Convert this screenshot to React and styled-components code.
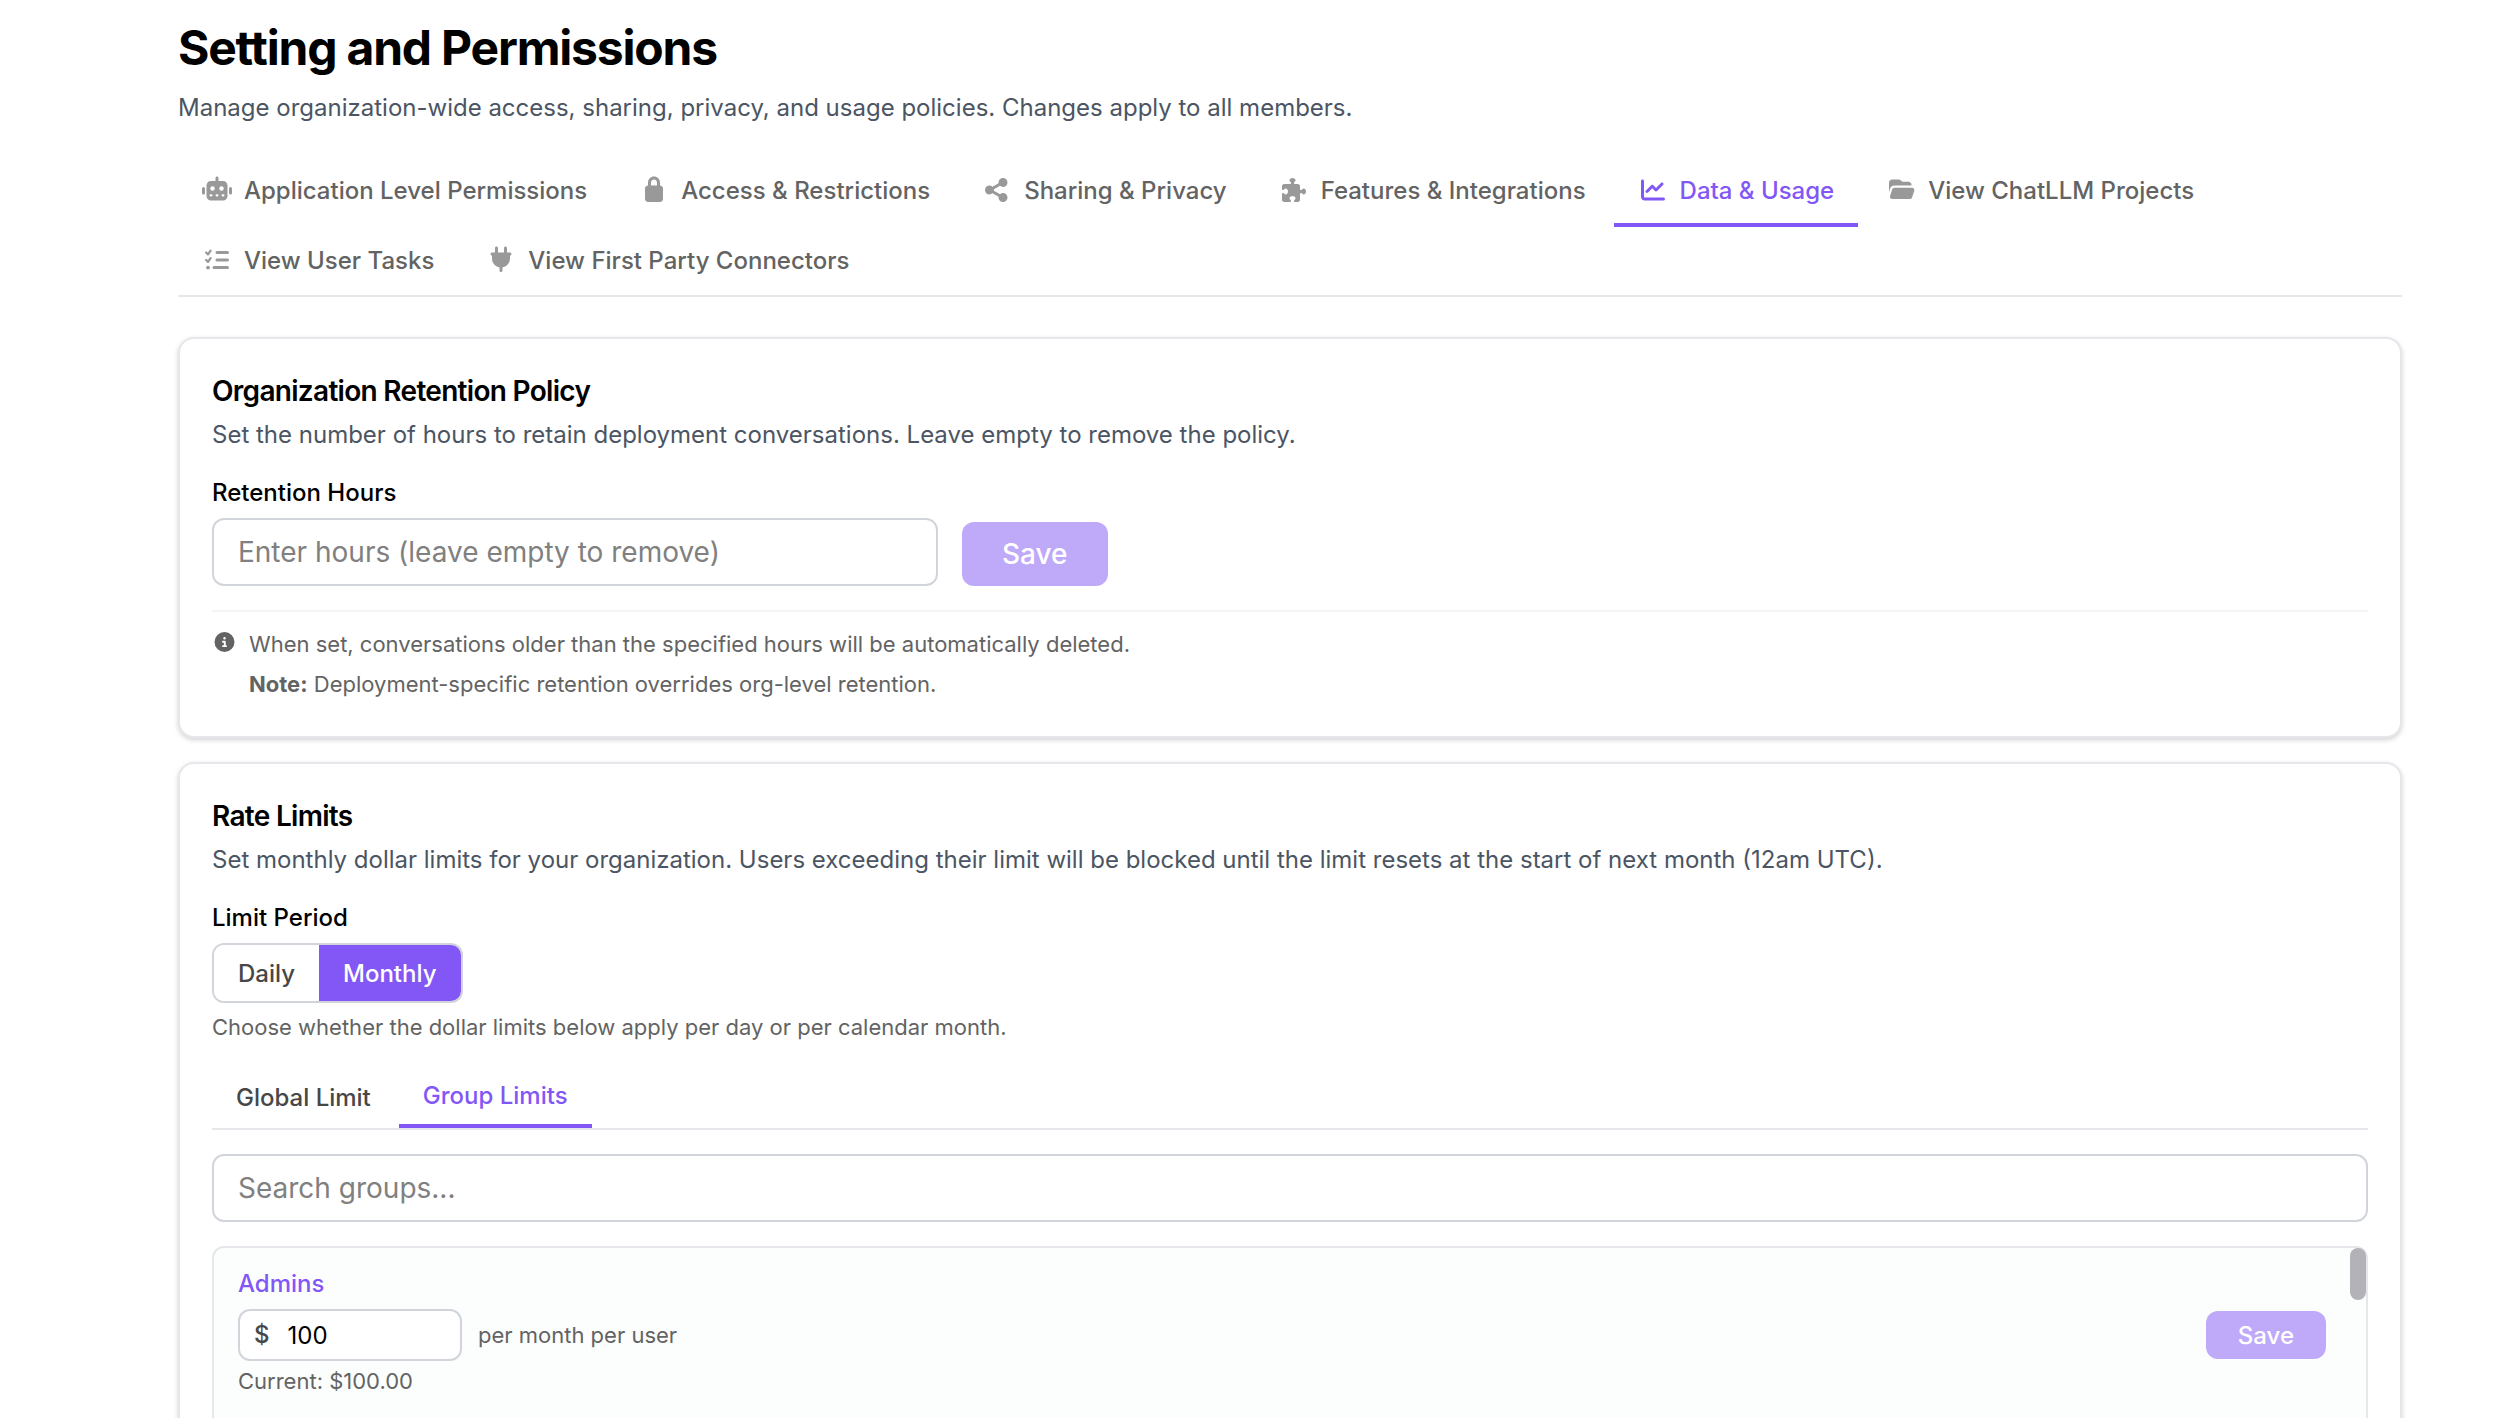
import { useState } from "react";
import styled, { createGlobalStyle, css } from "styled-components";

const GlobalStyle = createGlobalStyle`
  * {
    box-sizing: border-box;
  }

  body {
    margin: 0;
    background: #ffffff;
    color: #000000;
    font-family: Inter, "Liberation Sans", sans-serif;
    font-size: 24px;
    line-height: 36px;
  }

  button,
  input {
    font-family: inherit;
  }
`;

const Page = styled.main`
  height: 100vh;
  overflow: hidden;
  padding: 16px 96px 0 178px;
`;

const Title = styled.h1`
  margin: 0;
  font-size: 48px;
  line-height: 64px;
  font-weight: 700;
  letter-spacing: -0.025em;
`;

const Subtitle = styled.p`
  margin: 10px 0 0;
  color: #4b5563;
`;

const Tabs = styled.nav`
  display: flex;
  flex-wrap: wrap;
  column-gap: 4px;
  margin-top: 29px;
  border-bottom: 2px solid #e5e7eb;
`;

const Tab = styled.button`
  display: flex;
  align-items: center;
  gap: 12px;
  height: 72px;
  margin-bottom: -2px;
  padding: 2px 24px 0;
  border: none;
  border-bottom: 4px solid ${({ $active }) => ($active ? "#8257f6" : "transparent")};
  background: none;
  color: ${({ $active }) => ($active ? "#8257f6" : "#636363")};
  font-size: 24px;
  font-weight: 500;
  cursor: pointer;

  svg {
    width: 30px;
    height: 24px;
    overflow: visible;
    opacity: ${({ $active }) => ($active ? 1 : 0.65)};
  }
`;

const Card = styled.section`
  margin-top: ${({ $first }) => ($first ? "40px" : "24px")};
  padding: 32px;
  border: 2px solid #e5e7eb;
  border-radius: 16px;
  background: #ffffff;
  box-shadow: 0 2px 4px rgba(0, 0, 0, 0.1), 0 2px 6px rgba(0, 0, 0, 0.08);
`;

const CardTitle = styled.h2`
  margin: 0;
  font-size: 28px;
  line-height: 40px;
  font-weight: 600;
  letter-spacing: -0.025em;
`;

const CardText = styled.p`
  margin: 6px 0 0;
  color: #4b5563;
`;

const Label = styled.label`
  display: block;
  margin: 22px 0 7px;
  font-weight: 500;
`;

const FormRow = styled.div`
  display: flex;
  align-items: flex-end;
  gap: 24px;
`;

const inputBox = css`
  border: 2px solid #d1d5db;
  border-radius: 12px;
  background: #ffffff;
  outline: none;
`;

const TextInput = styled.input`
  ${inputBox}
  display: block;
  width: 100%;
  max-width: ${({ $width }) => $width || "none"};
  height: 68px;
  padding: 0 24px;
  font-size: 28px;

  &::placeholder {
    color: #808080;
  }
`;

const SaveButton = styled.button`
  height: ${({ $small }) => ($small ? "48px" : "64px")};
  padding: 0 ${({ $small }) => ($small ? "32px" : "40px")};
  border: none;
  border-radius: 12px;
  background: #bfa9f9;
  color: #ffffff;
  font-size: ${({ $small }) => ($small ? "24px" : "28px")};
  font-weight: 500;
`;

const Notes = styled.div`
  display: flex;
  gap: 12px;
  margin-top: 24px;
  padding-top: 12px;
  border-top: 2px solid #f3f4f6;
  color: #636363;
  font-size: 22px;
  line-height: 40px;

  svg {
    flex: none;
    width: 25px;
    height: 20px;
    margin-top: 8px;
  }

  p {
    margin: 0;
  }
`;

const Segmented = styled.div`
  display: flex;
  width: fit-content;
  overflow: hidden;
  border: 2px solid #d1d5db;
  border-radius: 12px;
`;

const Segment = styled.button`
  height: 56px;
  padding: 0 24px;
  border: none;
  background: ${({ $active }) => ($active ? "#8257f6" : "#ffffff")};
  color: ${({ $active }) => ($active ? "#ffffff" : "#474747")};
  font-size: 24px;
  font-weight: 500;
`;

const Hint = styled.p`
  margin: ${({ $gap }) => $gap || "0"} 0 0;
  color: #636363;
  font-size: 22px;
  line-height: 32px;
`;

const LimitTabs = styled.div`
  display: flex;
  gap: 4px;
  margin: 24px 0;
  border-bottom: 2px solid #e5e7eb;
`;

const LimitTab = styled.button`
  height: 61px;
  padding: 0 24px;
  border: none;
  border-bottom: ${({ $active }) => ($active ? "4px solid #8257f6" : "none")};
  background: none;
  color: ${({ $active }) => ($active ? "#8257f6" : "#474747")};
  font-size: 24px;
  font-weight: 500;
`;

const GroupList = styled.div`
  position: relative;
  height: 800px;
  margin-top: 24px;
  padding: 16px 40px 16px 24px;
  border: 2px solid #e5e7eb;
  border-radius: 12px;
  background: #fcfefd;
`;

const ScrollThumb = styled.span`
  position: absolute;
  top: 0;
  right: 0;
  width: 16px;
  height: 52px;
  border-radius: 8px;
  background: #b3b2b8;
`;

const GroupName = styled.label`
  display: block;
  line-height: 40px;
  color: #8257f6;
  font-weight: 500;
`;

const GroupRow = styled.div`
  display: flex;
  align-items: center;
  gap: 16px;
  margin-top: 5px;
  color: #636363;
  font-size: 22px;

  ${SaveButton} {
    margin-left: auto;
  }
`;

const Amount = styled.span`
  ${inputBox}
  display: flex;
  align-items: center;
  gap: 18px;
  width: 224px;
  height: 52px;
  padding: 0 14px;
  color: #474747;
  font-size: 24px;
  font-weight: 500;

  input {
    width: 100%;
    padding: 0;
    border: none;
    outline: none;
    font-size: 24px;
  }
`;

const icons = {
  robot: (
    <svg viewBox="0 0 640 512" fill="currentColor">
      <path
        fillRule="evenodd"
        d="M352 0c0-17.700-14.300-32-32-32S288-17.700 288 0v64h-96c-53 0-96 43-96 96v224c0 53 43 96 96 96h256c53 0 96-43 96-96V160c0-53-43-96-96-96h-96zM184 344h16a24 24 0 0 1 0 48h-16a24 24 0 0 1 0-48zm128 0h16a24 24 0 0 1 0 48h-16a24 24 0 0 1 0-48zm128 0h16a24 24 0 0 1 0 48h-16a24 24 0 0 1 0-48zM224 176a48 48 0 1 1 0 96 48 48 0 1 1 0-96zm192 0a48 48 0 1 1 0 96 48 48 0 1 1 0-96zM64 224a32 32 0 0 0-64 0v96a32 32 0 0 0 64 0zm544-32a32 32 0 0 0-32 32v96a32 32 0 0 0 64 0v-96a32 32 0 0 0-32-32z"
      />
    </svg>
  ),
  lock: (
    <svg viewBox="0 0 384 512" fill="currentColor">
      <path d="M128 96v64h128V96c0-35-29-64-64-64s-64 29-64 64zm-64 64V96C64 25 121-32 192-32S320 25 320 96v64c35 0 64 29 64 64v224c0 35-29 64-64 64H64c-35 0-64-29-64-64V224c0-35 29-64 64-64z" />
    </svg>
  ),
  share: (
    <svg viewBox="0 0 512 512" fill="currentColor">
      <path d="M384 192c53 0 96-43 96-96s-43-96-96-96-96 43-96 96c0 5.400.5 10.800 1.300 16l-129.700 72.100c-16.900-15-39.200-24.100-63.600-24.100-53 0-96 43-96 96s43 96 96 96c24.400 0 46.600-9.100 63.600-24.100L289.300 400c-.9 5.200-1.300 10.500-1.300 16 0 53 43 96 96 96s96-43 96-96-43-96-96-96c-24.400 0-46.600 9.100-63.600 24.100L190.700 272c.9-5.200 1.300-10.500 1.300-16s-.5-10.800-1.300-16l129.700-72.100c16.900 15 39.200 24.100 63.600 24.100z" />
    </svg>
  ),
  puzzle: (
    <svg viewBox="0 0 512 512" fill="currentColor">
      <path d="M192 104.800c0-9.200-5.800-17.300-13.200-22.800C167.200 73.300 160 61.300 160 48c0-26.500 28.700-48 64-48s64 21.500 64 48c0 13.300-7.200 25.300-18.800 34c-7.400 5.500-13.200 13.600-13.200 22.800c0 12.800 10.400 23.200 23.200 23.200H336c26.500 0 48 21.500 48 48v56.800c0 12.800 10.400 23.200 23.200 23.200c9.200 0 17.300-5.800 22.800-13.200c8.700-11.600 20.700-18.800 34-18.800c26.500 0 48 28.700 48 64s-21.500 64-48 64c-13.300 0-25.300-7.200-34-18.800c-5.500-7.400-13.600-13.200-22.800-13.200c-12.800 0-23.200 10.400-23.200 23.200V464c0 26.500-21.500 48-48 48H279.200c-12.800 0-23.200-10.400-23.200-23.200c0-9.200 5.800-17.300 13.200-22.800c11.600-8.700 18.800-20.700 18.800-34c0-26.500-28.700-48-64-48s-64 21.500-64 48c0 13.300 7.200 25.300 18.800 34c7.400 5.500 13.200 13.600 13.200 22.800c0 12.800-10.400 23.200-23.200 23.200H48c-26.500 0-48-21.500-48-48V343.200C0 330.400 10.400 320 23.200 320c9.200 0 17.300 5.800 22.800 13.200C54.700 344.800 66.700 352 80 352c26.500 0 48-28.700 48-64s-21.500-64-48-64c-13.300 0-25.300 7.200-34 18.800C40.500 250.200 32.400 256 23.200 256C10.400 256 0 245.600 0 232.800V176c0-26.500 21.500-48 48-48H168.800c12.800 0 23.200-10.400 23.200-23.200z" />
    </svg>
  ),
  chart: (
    <svg viewBox="0 0 512 512" fill="currentColor">
      <path d="M64 64c0-17.700-14.300-32-32-32S0 46.300 0 64v336c0 44.200 35.800 80 80 80h400c17.700 0 32-14.300 32-32s-14.300-32-32-32H80c-8.800 0-16-7.200-16-16zm406.600 86.600c12.500-12.500 12.500-32.800 0-45.300s-32.800-12.500-45.300 0L320 210.700l-57.400-57.400c-12.500-12.500-32.800-12.500-45.300 0l-112 112c-12.500 12.500-12.500 32.800 0 45.300s32.800 12.500 45.300 0L240 221.300l57.400 57.400c12.500 12.500 32.800 12.500 45.300 0l128-128z" />
    </svg>
  ),
  folder: (
    <svg viewBox="0 0 576 512" fill="currentColor">
      <path d="M56 225.600l-23.600 70.600V96c0-35.300 28.700-64 64-64h138.700c13.800 0 27.300 4.500 38.400 12.800l38.400 28.800c5.500 4.200 12.300 6.400 19.200 6.400h117.300c35.300 0 64 28.700 64 64v16H147c-41.300 0-78 26.400-91 65.600zM477.800 448H99c-32.800 0-55.900-32.100-45.500-63.200l48-144C108 221.200 126.400 208 147 208h378.800c32.800 0 55.900 32.100 45.500 63.200l-48 144c-6.500 19.600-24.900 32.800-45.500 32.800z" />
    </svg>
  ),
  tasks: (
    <svg viewBox="0 0 512 512" fill="none" stroke="currentColor" strokeLinecap="round" strokeLinejoin="round">
      <path strokeWidth="64" d="M256 96h224M256 256h224M192 416h288" />
      <path strokeWidth="48" d="m24 96 40 40 56-80M24 256l40 40 56-80" />
      <circle cx="64" cy="416" r="40" fill="currentColor" stroke="none" />
    </svg>
  ),
  plug: (
    <svg viewBox="0 0 448 512" fill="currentColor">
      <path d="M128-32c17.700 0 32 14.300 32 32v96h128V0c0-17.700 14.300-32 32-32s32 14.300 32 32v96h64c17.700 0 32 14.300 32 32s-14.300 32-32 32v64c0 95.100-69.200 174.100-160 189.300V480c0 17.700-14.300 32-32 32s-32-14.300-32-32v-66.700C101.200 398.100 32 319.100 32 224v-64c-17.700 0-32-14.300-32-32s14.300-32 32-32h64V0c0-17.700 14.300-32 32-32z" />
    </svg>
  ),
};

const tabs = [
  { label: "Application Level Permissions", icon: icons.robot },
  { label: "Access & Restrictions", icon: icons.lock },
  { label: "Sharing & Privacy", icon: icons.share },
  { label: "Features & Integrations", icon: icons.puzzle },
  { label: "Data & Usage", icon: icons.chart },
  { label: "View ChatLLM Projects", icon: icons.folder },
  { label: "View User Tasks", icon: icons.tasks },
  { label: "View First Party Connectors", icon: icons.plug },
];

const InfoIcon = () => (
  <svg viewBox="0 0 512 512" fill="currentColor">
    <path
      fillRule="evenodd"
      d="M256 0a256 256 0 1 1 0 512 256 256 0 0 1 0-512zm-32 160a32 32 0 1 0 64 0 32 32 0 0 0-64 0zm-8 64a24 24 0 0 0 0 48h24v64h-24a24 24 0 0 0 0 48h80a24 24 0 0 0 0-48h-8v-88a24 24 0 0 0-24-24z"
    />
  </svg>
);

const App = () => {
  const [activeTab, setActiveTab] = useState("Data & Usage");
  const [period, setPeriod] = useState("Monthly");
  const [limitTab, setLimitTab] = useState("Group Limits");

  return (
    <Page>
      <GlobalStyle />
      <Title>Setting and Permissions</Title>
      <Subtitle>
        Manage organization-wide access, sharing, privacy, and usage policies. Changes apply to all members.
      </Subtitle>

      <Tabs>
        {tabs.map(({ label, icon }) => (
          <Tab key={label} $active={label === activeTab} onClick={() => setActiveTab(label)}>
            {icon}
            {label}
          </Tab>
        ))}
      </Tabs>

      <Card $first>
        <CardTitle>Organization Retention Policy</CardTitle>
        <CardText>
          Set the number of hours to retain deployment conversations. Leave empty to remove the policy.
        </CardText>
        <Label htmlFor="retention">Retention Hours</Label>
        <FormRow>
          <TextInput id="retention" $width="726px" placeholder="Enter hours (leave empty to remove)" />
          <SaveButton disabled>Save</SaveButton>
        </FormRow>
        <Notes>
          <InfoIcon />
          <div>
            <p>When set, conversations older than the specified hours will be automatically deleted.</p>
            <p>
              <strong>Note:</strong> Deployment-specific retention overrides org-level retention.
            </p>
          </div>
        </Notes>
      </Card>

      <Card>
        <CardTitle>Rate Limits</CardTitle>
        <CardText>
          Set monthly dollar limits for your organization. Users exceeding their limit will be blocked until the limit
          resets at the start of next month (12am UTC).
        </CardText>
        <Label as="div" id="period">
          Limit Period
        </Label>
        <Segmented role="group" aria-labelledby="period">
          {["Daily", "Monthly"].map((name) => (
            <Segment key={name} $active={name === period} onClick={() => setPeriod(name)}>
              {name}
            </Segment>
          ))}
        </Segmented>
        <Hint $gap="8px">Choose whether the dollar limits below apply per day or per calendar month.</Hint>

        <LimitTabs>
          {["Global Limit", "Group Limits"].map((name) => (
            <LimitTab key={name} $active={name === limitTab} onClick={() => setLimitTab(name)}>
              {name}
            </LimitTab>
          ))}
        </LimitTabs>

        <TextInput aria-label="Search groups" placeholder="Search groups..." />

        <GroupList>
          <ScrollThumb />
          <GroupName htmlFor="admins">Admins</GroupName>
          <GroupRow>
            <Amount>
              $
              <input id="admins" defaultValue="100" />
            </Amount>
            per month per user
            <SaveButton $small disabled>
              Save
            </SaveButton>
          </GroupRow>
          <Hint $gap="4px">Current: $100.00</Hint>
        </GroupList>
      </Card>
    </Page>
  );
};

export default App;
